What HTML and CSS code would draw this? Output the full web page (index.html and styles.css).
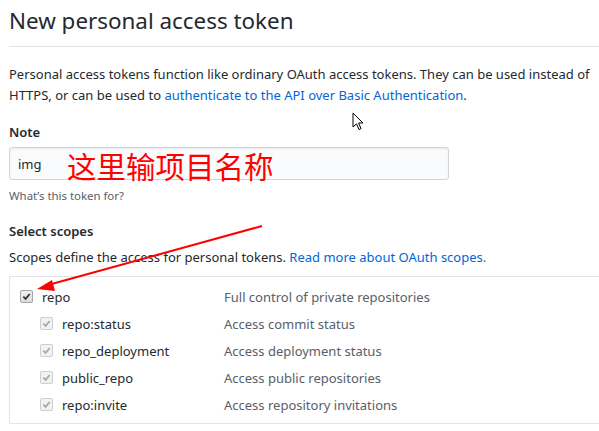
FILE: index.html
```html
<!DOCTYPE html>
<html lang="en">
<head>
<meta charset="utf-8">
<link rel="stylesheet" href="styles.css">
</head>
<body>
<div class="page">
  <h1 class="title">New personal access token</h1>
  <p class="intro">Personal access tokens function like ordinary OAuth access tokens. They can be used instead of<br>HTTPS, or can be used to <a href="#">authenticate to the API over Basic Authentication</a>.</p>

  <div class="field">
    <label class="label">Note</label>
    <div class="input">img</div>
    <p class="note">What’s this token for?</p>
  </div>

  <div class="field">
    <label class="label">Select scopes</label>
    <p class="desc">Scopes define the access for personal tokens. <a href="#">Read more about OAuth scopes.</a></p>
  </div>

  <div class="scopes">
    <div class="row main">
      <span class="cb checked"><svg viewBox="0 0 10 10"><path d="M1.5 5.2 L4 7.6 L8.6 2.2" /></svg></span>
      <span class="name">repo</span>
      <span class="info">Full control of private repositories</span>
    </div>
    <div class="row sub">
      <span class="cb disabled"><svg viewBox="0 0 10 10"><path d="M1.5 5.2 L4 7.6 L8.6 2.2" /></svg></span>
      <span class="name">repo:status</span>
      <span class="info">Access commit status</span>
    </div>
    <div class="row sub">
      <span class="cb disabled"><svg viewBox="0 0 10 10"><path d="M1.5 5.2 L4 7.6 L8.6 2.2" /></svg></span>
      <span class="name">repo_deployment</span>
      <span class="info">Access deployment status</span>
    </div>
    <div class="row sub">
      <span class="cb disabled"><svg viewBox="0 0 10 10"><path d="M1.5 5.2 L4 7.6 L8.6 2.2" /></svg></span>
      <span class="name">public_repo</span>
      <span class="info">Access public repositories</span>
    </div>
    <div class="row sub">
      <span class="cb disabled"><svg viewBox="0 0 10 10"><path d="M1.5 5.2 L4 7.6 L8.6 2.2" /></svg></span>
      <span class="name">repo:invite</span>
      <span class="info">Access repository invitations</span>
    </div>
  </div>
</div>

<div class="annot-text">这里输项目名称</div>
<svg class="arrow" width="599" height="431" viewBox="0 0 599 431">
  <line x1="262" y1="226" x2="48" y2="285" stroke="#ff0000" stroke-width="2" />
  <polygon points="37,289 52,280 55,291" fill="#ff0000" />
</svg>
<svg class="cursor" width="14" height="20" viewBox="0 0 14 20">
  <path d="M1 1 L1 15 L4.5 11.8 L7 17.5 L9 16.6 L6.6 11 L11 11 Z" fill="#fff" stroke="#000" stroke-width="1" stroke-linejoin="miter"/>
</svg>
</body>
</html>
```

FILE: styles.css
```css
html, body {
  margin: 0;
  padding: 0;
  background: #fff;
  overflow: hidden;
}
body {
  width: 599px;
  height: 431px;
  position: relative;
  font-family: "Noto Sans", "Open Sans", sans-serif;
  color: #24292e;
  font-size: 13px;
}
.page {
  padding: 6px 0 0 9px;
  width: 590px;
  overflow: hidden;
}
.title {
  margin: 0;
  font-size: 22.4px;
  font-weight: 400;
  line-height: 30px;
  padding-bottom: 10px;
  border-bottom: 1px solid #e1e4e8;
}
.intro {
  margin: 17px 0 0;
  line-height: 21px;
  white-space: nowrap;
}
a {
  color: #0366d6;
  text-decoration: none;
}
.field {
  margin-top: 16px;
}
.label {
  display: block;
  font-weight: 600;
  font-size: 13px;
  line-height: 20px;
}
.input {
  margin-top: 5px;
  width: 422px;
  height: 31px;
  border: 1px solid #d1d5da;
  border-radius: 3px;
  background: #fafbfc;
  box-shadow: inset 0 1px 2px rgba(27,31,35,0.075);
  padding: 0 8px;
  line-height: 32px;
  font-size: 13px;
}
.note {
  margin: 7px 0 0;
  font-size: 11.4px;
  color: #586069;
  line-height: 18px;
}
.desc {
  margin: 6px 0 0;
  line-height: 21px;
}
.scopes {
  margin-top: 8px;
  border: 1px solid #e1e4e8;
  border-right: none;
  padding: 6px 0 5px;
}
.row {
  display: flex;
  align-items: center;
  height: 27px;
  white-space: nowrap;
}
.row.main { padding-left: 10px; }
.row.sub { padding-left: 30px; }
.cb {
  width: 11px;
  height: 11px;
  border: 1px solid #a5a5a5;
  border-radius: 2px;
  display: flex;
  align-items: center;
  justify-content: center;
  margin-right: 9px;
  background: linear-gradient(#f1f1f1, #dcdcdc);
}
.cb svg {
  width: 9px;
  height: 9px;
  fill: none;
  stroke-width: 2;
}
.cb.checked svg { stroke: #333; }
.cb.disabled {
  border-color: #cfcfcf;
  background: #f2f2f2;
}
.cb.disabled svg { stroke: #a8a8a8; }
.name {
  width: 182px;
}
.row.sub .name { width: 162px; }
.info {
  color: #586069;
}
.annot-text {
  position: absolute;
  left: 67px;
  top: 150px;
  font-family: "Noto Sans CJK SC", sans-serif;
  font-size: 29.5px;
  line-height: 30px;
  color: #ff0000;
}
.arrow {
  position: absolute;
  left: 0;
  top: 0;
  pointer-events: none;
}
.cursor {
  position: absolute;
  left: 352px;
  top: 112px;
}
```
